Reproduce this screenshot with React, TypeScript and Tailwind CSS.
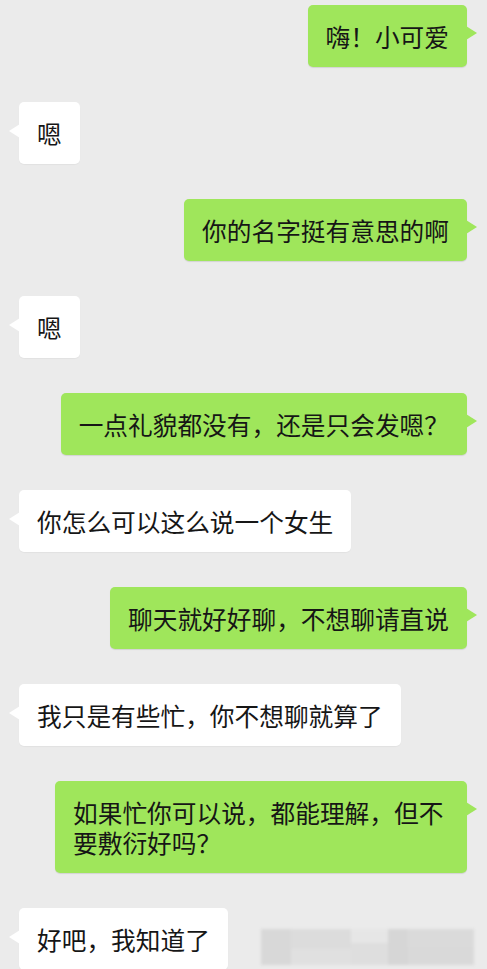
import type { ReactNode } from 'react';

type Message = {
  from: 'me' | 'them';
  text: string;
};

const messages: Message[] = [
  { from: 'me', text: '嗨！小可爱' },
  { from: 'them', text: '嗯' },
  { from: 'me', text: '你的名字挺有意思的啊' },
  { from: 'them', text: '嗯' },
  { from: 'me', text: '一点礼貌都没有，还是只会发嗯？' },
  { from: 'them', text: '你怎么可以这么说一个女生' },
  { from: 'me', text: '聊天就好好聊，不想聊请直说' },
  { from: 'them', text: '我只是有些忙，你不想聊就算了' },
  { from: 'me', text: '如果忙你可以说，都能理解，但不要敷衍好吗？' },
];

function Bubble({ from, children }: { from: 'me' | 'them'; children: ReactNode }) {
  const mine = from === 'me';
  return (
    <div
      className={
        mine
          ? 'relative max-w-[412px] shrink-0 rounded-[5px] bg-[#9fe65b] px-[18px] py-4 shadow-[0_1px_1px_rgba(0,0,0,0.1)]'
          : 'relative max-w-[412px] shrink-0 rounded-[5px] bg-white px-[18px] py-4 shadow-[0_1px_1px_rgba(0,0,0,0.04)]'
      }
    >
      {mine ? (
        <svg
          className="absolute top-[21px] right-[-11px]"
          width="12"
          height="14"
          viewBox="0 0 12 14"
        >
          <path d="M0 0 L11 7 L0 14 Z" fill="#9fe65b" />
        </svg>
      ) : (
        <svg
          className="absolute top-[22px] left-[-11px]"
          width="12"
          height="14"
          viewBox="0 0 12 14"
        >
          <path d="M12 0 L1 7 L12 14 Z" fill="#ffffff" />
        </svg>
      )}
      <p className="text-[24.7px] leading-[30px] text-[#161616]">{children}</p>
    </div>
  );
}

export default function App() {
  return (
    <div
      className="h-[969px] w-[487px] overflow-hidden bg-[#ebebeb] pt-[5px] pr-5 pl-[19px]"
      style={{ fontFamily: '"Noto Sans CJK SC", "Noto Sans", sans-serif' }}
    >
      <div className="flex flex-col gap-[35px]">
        {messages.map((m, i) => (
          <div key={i} className={m.from === 'me' ? 'flex justify-end' : 'flex justify-start'}>
            <Bubble from={m.from}>{m.text}</Bubble>
          </div>
        ))}

        <div className="flex items-start">
          <Bubble from="them">
            <span className="whitespace-nowrap">好吧，我知道了</span>
          </Bubble>
          {/* blurred name */}
          <div className="mt-[21px] ml-[33px] flex h-[36px] w-[213px] shrink-0 blur-[1.5px]">
            <div className="w-[30px] bg-[#d8d8d8]" />
            <div className="flex w-[60px] flex-col">
              <div className="h-[20px] bg-[#dcdcdc]" />
              <div className="flex-1 bg-[#e0e0e0]" />
            </div>
            <div className="flex w-[37px] flex-col">
              <div className="h-[14px] bg-[#e6e6e6]" />
              <div className="flex-1 bg-[#dedede]" />
            </div>
            <div className="w-[20px] bg-[#d6d6d6]" />
            <div className="flex flex-1 flex-col">
              <div className="h-[18px] bg-[#dadada]" />
              <div className="flex-1 bg-[#d9d9d9]" />
            </div>
          </div>
        </div>
      </div>
    </div>
  );
}
